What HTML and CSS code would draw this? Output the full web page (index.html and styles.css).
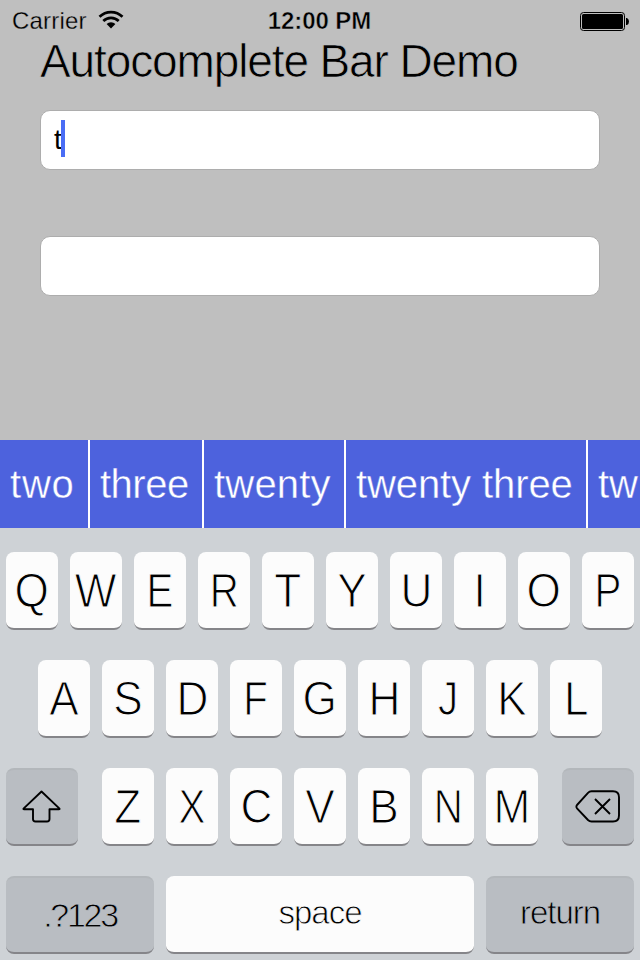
FILE: index.html
```
<!DOCTYPE html>
<html lang="en">
<head>
<meta charset="utf-8">
<title>Autocomplete Bar Demo</title>
<link rel="stylesheet" href="styles.css">
</head>
<body>
<div class="status">
  <div class="carrier"><span>Carrier</span>
    <svg class="wifi" width="26" height="20" viewBox="0 0 26 20"><g fill="none" stroke="#000" stroke-width="2.7"><path d="M1.5 6.8A16.3 16.3 0 0 1 24.5 6.8"/><path d="M5.3 11A11 11 0 0 1 20.7 11"/></g><path d="M8.6 14.1A6.2 6.2 0 0 1 17.4 14.1L13 18.6Z"/></svg>
  </div>
  <div class="time">12:00 PM</div>
  <svg class="battery" width="50" height="20" viewBox="0 0 50 20"><rect x=".5" y="1.5" width="44" height="18" rx="3" fill="none" stroke="#000"/><rect x="2" y="3" width="41" height="15" rx="1.5"/><path d="M46 7h1q2 1 2 3.5t-2 3.5h-1z"/></svg>
</div>
<main class="demo">
  <h1>Autocomplete Bar Demo</h1>
  <div class="field"><span>t</span><i class="caret"></i></div>
  <div class="field"></div>
</main>
<div class="suggestions">
  <div class="item two">two</div><div class="item three">three</div><div class="item twenty">twenty</div><div class="item twenty-three">twenty three</div><div class="item">tw</div>
</div>
<div class="keyboard">
  <div class="row">
    <div class="key"><span>Q</span></div><div class="key"><span>W</span></div><div class="key"><span class="slim">E</span></div><div class="key"><span class="slim">R</span></div><div class="key"><span>T</span></div><div class="key"><span>Y</span></div><div class="key"><span>U</span></div><div class="key"><span>I</span></div><div class="key"><span>O</span></div><div class="key"><span class="slim">P</span></div>
  </div>
  <div class="row">
    <div class="key"><span>A</span></div><div class="key"><span>S</span></div><div class="key"><span>D</span></div><div class="key"><span class="slim">F</span></div><div class="key"><span>G</span></div><div class="key"><span>H</span></div><div class="key"><span class="slim">J</span></div><div class="key"><span>K</span></div><div class="key"><span>L</span></div>
  </div>
  <div class="row spread">
    <div class="key dark side"><svg width="40" height="34" viewBox="0 0 40 34"><path d="M19.5 1.5L1.5 18.6Q1.2 19.2 2 19.2H11V29Q11 31.5 13.5 31.5H25Q27.5 31.5 27.5 29V19.2H37Q37.8 19.2 37.5 18.6Z" fill="none" stroke="#000" stroke-width="1.9" stroke-linejoin="round"/></svg></div>
    <div class="letters">
      <div class="key"><span>Z</span></div><div class="key"><span class="slim">X</span></div><div class="key"><span>C</span></div><div class="key"><span>V</span></div><div class="key"><span>B</span></div><div class="key"><span class="slim">N</span></div><div class="key"><span>M</span></div>
    </div>
    <div class="key dark side"><svg width="46" height="34" viewBox="0 0 46 34"><g fill="none" stroke="#000" stroke-width="1.9" stroke-linejoin="round"><path d="M16.5 1.3H38Q44 1.3 44 7.3V25.5Q44 31.5 38 31.5H16.5Q14.5 31.5 13 30L2 18.3Q.8 16.7 2 15L13 2.8Q14.5 1.3 16.5 1.3Z"/><path d="M20 9L35 24M35 9L20 24"/></g></svg></div>
  </div>
  <div class="row">
    <div class="key dark wide digits"><span>.?123</span></div>
    <div class="key space"><span>space</span></div>
    <div class="key dark wide return"><span>return</span></div>
  </div>
</div>
</body>
</html>
```
FILE: styles.css
```
* { box-sizing: border-box; }
body {
  margin: 0;
  width: 640px;
  height: 960px;
  overflow: hidden;
  background: #bfbfbf;
  color: #000;
  font-family: "Liberation Sans", Arial, sans-serif;
}
svg { display: block; }
.status {
  height: 40px;
  padding: 1px 10px 0 12px;
  display: grid;
  grid-template-columns: 1fr auto 1fr;
  align-items: center;
  font-size: 24px;
  line-height: 39px;
}
.carrier {
  display: flex;
  align-items: center;
  gap: 11px;
  letter-spacing: .2px;
  -webkit-text-stroke: .3px #bfbfbf;
}
.wifi { margin-top: -1px; }
.time { margin-left: -3px; font-weight: bold; letter-spacing: -.1px; -webkit-text-stroke: .5px #bfbfbf; }
.battery { justify-self: end; }
.demo { height: 400px; padding: 0 40px; }
h1 {
  margin: 0 0 26px;
  height: 44px;
  font-size: 46px;
  line-height: 42px;
  font-weight: normal;
  letter-spacing: -1.12px;
  white-space: nowrap;
  -webkit-text-stroke: .7px #bfbfbf;
}
.field {
  height: 60px;
  margin-bottom: 66px;
  padding: 0 13px;
  display: flex;
  align-items: center;
  background: #fff;
  border: 1px solid #adadad;
  border-radius: 10px;
  font-size: 28px;
}
.caret { width: 4px; height: 37px; background: #4a6df5; margin-left: -1px; margin-top: -3px; }
.suggestions {
  height: 88px;
  display: flex;
  overflow: hidden;
  background: #4d62dd;
  color: #fff;
  font-size: 40px;
  line-height: 88px;
  -webkit-text-stroke: .4px #4d62dd;
}
.item {
  flex: 1 0 0;
  padding-left: 10px;
  white-space: nowrap;
}
.two, .three, .twenty, .twenty-three { flex: none; border-right: 2px solid #fff; }
.two { width: 90px; letter-spacing: .8px; }
.three { width: 114px; letter-spacing: -.5px; }
.twenty { width: 142px; letter-spacing: .2px; }
.twenty-three { width: 242px; letter-spacing: -.1px; }
.keyboard {
  height: 432px;
  padding: 24px 6px 6px;
  display: flex;
  flex-direction: column;
  gap: 30px;
  background: #ced2d6;
}
.row, .letters { display: flex; justify-content: center; gap: 12px; }
.spread { justify-content: space-between; }
.key {
  width: 52px;
  height: 78px;
  display: flex;
  align-items: center;
  justify-content: center;
  background: #fcfcfc;
  border-bottom: 2px solid #858589;
  border-radius: 8px;
  font-size: 48px;
  line-height: 76px;
  -webkit-text-stroke: 1.1px #fcfcfc;
}
.key span { transform: translateY(1px) scaleX(.92); }
.key .slim { transform: translateY(1px) scaleX(.84); }
.dark {
  background: #b9bdc2;
  border-top: 2px solid #b3b7bb;
  -webkit-text-stroke: .8px #b9bdc2;
}
.side { width: 72px; }
.wide { width: 148px; }
.space { width: 308px; -webkit-text-stroke: .8px #fcfcfc; }
.space, .return { font-size: 33px; letter-spacing: -1px; }
.space span, .return span, .digits span { transform: none; padding-bottom: 4px; }
.space span { padding-bottom: 2px; }
.digits { font-size: 34px; letter-spacing: -2.3px; }
.digits span { padding: 0; }
```
